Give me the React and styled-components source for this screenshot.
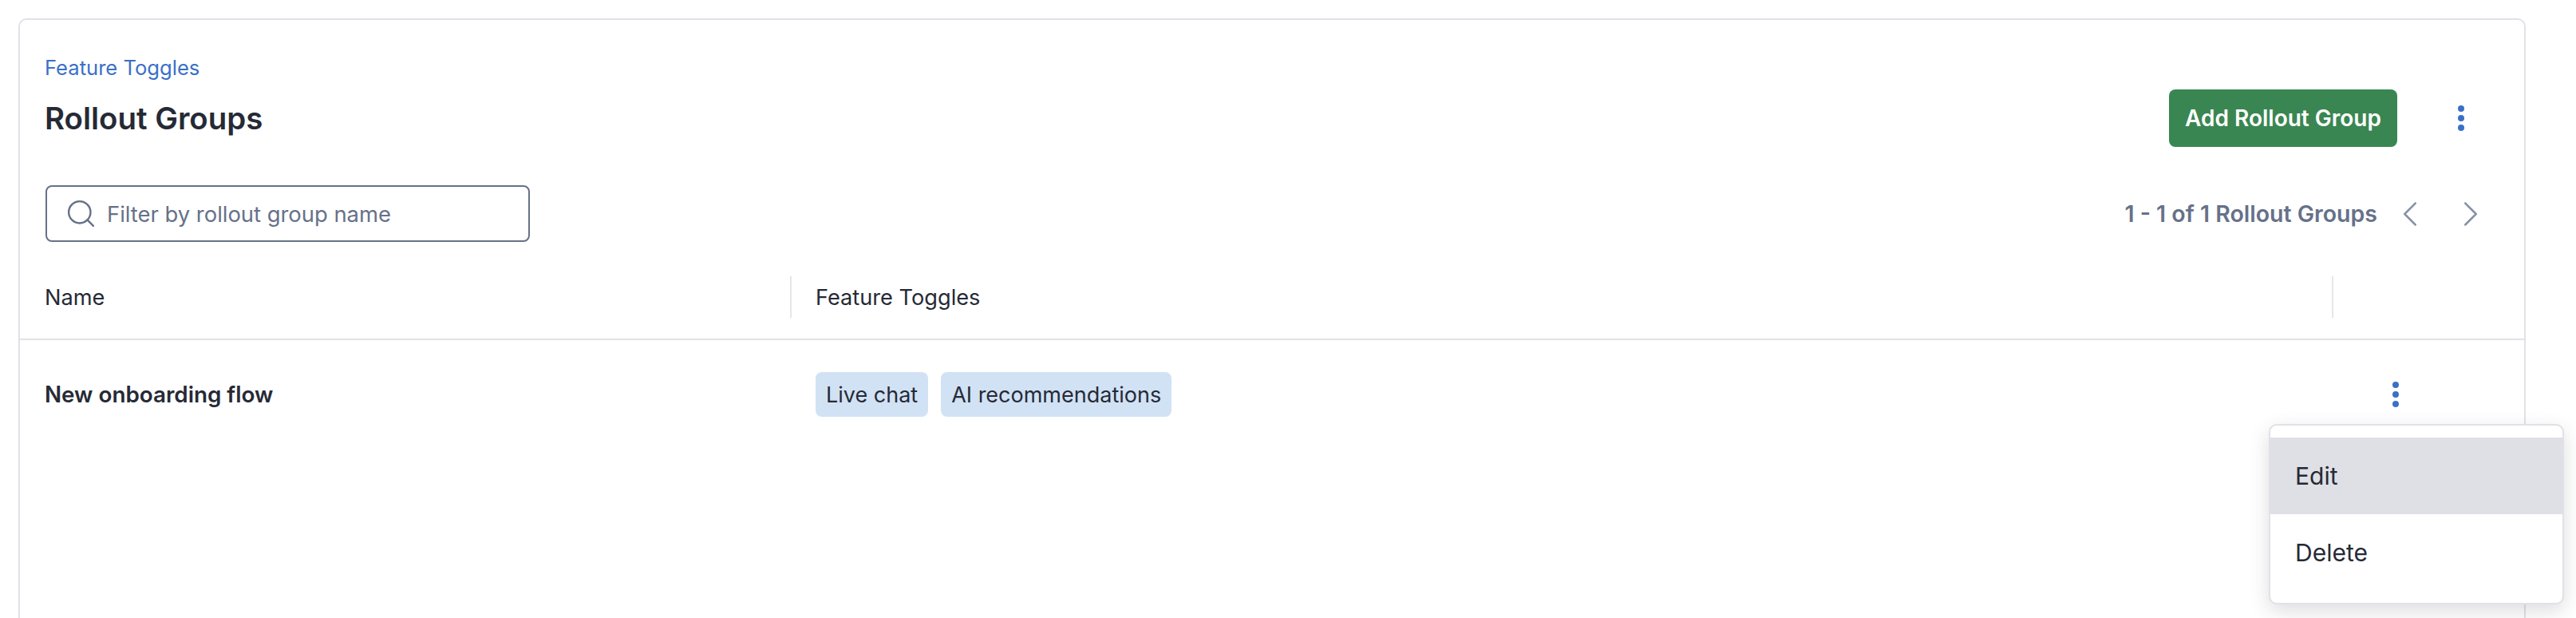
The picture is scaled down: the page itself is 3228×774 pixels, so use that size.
import React from 'react';
import styled, { createGlobalStyle } from 'styled-components';
import { Search, ChevronLeft, ChevronRight } from 'lucide-react';

const GlobalStyle = createGlobalStyle`
  html, body {
    margin: 0;
    padding: 0;
    height: 774px;
    overflow: hidden;
    background: #ffffff;
    font-family: Inter, "Liberation Sans", sans-serif;
    color: #262a35;
  }
  * {
    box-sizing: border-box;
  }
`;

const Page = styled.div`
  padding: 23px 63px 0 23px;
  height: 774px;
  overflow: hidden;
`;

const Card = styled.section`
  height: 800px;
  border: 2px solid #e1e1e7;
  border-radius: 10px;
`;

const Header = styled.header`
  display: flex;
  align-items: flex-start;
  justify-content: space-between;
  padding: 42px 75px 0 31px;
  height: 207px;
`;

const Crumb = styled.a`
  display: block;
  font-size: 25.6px;
  line-height: 36px;
  color: #3a70c7;
`;

const Title = styled.h1`
  margin: 18px 0 0;
  font-size: 38.4px;
  line-height: 54px;
  font-weight: 600;
  color: #262a35;
`;

const Actions = styled.div`
  display: flex;
  align-items: center;
  gap: 76px;
  margin-top: 45px;
`;

const PrimaryButton = styled.button`
  height: 72px;
  width: 286px;
  border: 0;
  border-radius: 8px;
  background: #3a8652;
  color: #ffffff;
  font: 600 28px/1 Inter, sans-serif;
`;

const Kebab = styled.span`
  display: flex;
  flex-direction: column;
  align-items: center;
  gap: 4px;
  width: 8px;
`;

const Dot = styled.i`
  display: block;
  width: 8px;
  height: 8px;
  border-radius: 50%;
  background: #3a70c7;
`;

const Toolbar = styled.div`
  display: flex;
  align-items: center;
  justify-content: space-between;
  height: 71px;
  padding: 0 40px 0 32px;
`;

const SearchBox = styled.label`
  display: flex;
  align-items: center;
  gap: 12px;
  width: 607px;
  height: 71px;
  padding: 1px 22px 0;
  border: 2px solid #667189;
  border-radius: 8px;
  color: #667189;
  font-size: 27.4px;
`;

const SearchIcon = styled(Search)`
  width: 41px;
  height: 41px;
  margin-top: -1px;
`;

const Pager = styled.div`
  display: flex;
  align-items: center;
  color: #667189;
  font-size: 28.5px;
  font-weight: 600;
`;

const PagerIcons = styled.div`
  display: flex;
  gap: 22px;
  margin-left: 14px;
  color: #8792a8;
`;

const Grid = styled.div`
  display: grid;
  grid-template-columns: 965px 1932px 1fr;
`;

const HeadRow = styled(Grid)`
  align-items: center;
  height: 123px;
  padding-top: 17px;
  border-bottom: 2px solid #e1e1e7;
`;

const HeadCell = styled.div`
  display: flex;
  align-items: center;
  height: 52px;
  padding-left: ${p => (p.$first ? '31px' : '30px')};
  border-left: ${p => (p.$first ? '0' : '2px solid #e6e6ea')};
  font-size: 27.2px;
  color: #262a35;
`;

const BodyRow = styled(Grid)`
  position: relative;
  align-items: center;
  height: 136px;
`;

const NameCell = styled.div`
  padding-left: 31px;
  font-size: 27.8px;
  font-weight: 600;
`;

const TagList = styled.div`
  display: flex;
  gap: 16px;
  padding-left: 32px;
`;

const Tag = styled.span`
  display: flex;
  align-items: center;
  height: 56px;
  padding: 0 13px;
  border-radius: 8px;
  background: #d1e2f5;
  font-size: 27px;
`;

const RowAction = styled.div`
  display: flex;
  padding-left: 76px;
`;

const Menu = styled.div`
  position: absolute;
  top: 105px;
  right: -50px;
  width: 370px;
  height: 226px;
  padding: 15px 0;
  border: 2px solid #e1e1e7;
  border-radius: 10px;
  background: #ffffff;
  box-shadow: 0 8px 24px rgba(38, 42, 53, 0.16);
`;

const MenuItem = styled.div`
  display: flex;
  align-items: center;
  height: 96px;
  padding-left: 31px;
  font-size: 30px;
  background: ${p => (p.$active ? '#dfe0e5' : 'transparent')};
`;

const Dots = () => (
  <Kebab>
    <Dot />
    <Dot />
    <Dot />
  </Kebab>
);

const App = () => {
  return (
    <Page>
      <GlobalStyle />
      <Card>
        <Header>
          <div>
            <Crumb>Feature Toggles</Crumb>
            <Title>Rollout Groups</Title>
          </div>
          <Actions>
            <PrimaryButton>Add Rollout Group</PrimaryButton>
            <Dots />
          </Actions>
        </Header>
        <Toolbar>
          <SearchBox>
            <SearchIcon strokeWidth={1.4} />
            Filter by rollout group name
          </SearchBox>
          <Pager>
            1 - 1 of 1 Rollout Groups
            <PagerIcons>
              <ChevronLeft size={54} strokeWidth={1.1} />
              <ChevronRight size={54} strokeWidth={1.1} />
            </PagerIcons>
          </Pager>
        </Toolbar>
        <HeadRow>
          <HeadCell $first>Name</HeadCell>
          <HeadCell>Feature Toggles</HeadCell>
          <HeadCell />
        </HeadRow>
        <BodyRow>
          <NameCell>New onboarding flow</NameCell>
          <TagList>
            <Tag>Live chat</Tag>
            <Tag>AI recommendations</Tag>
          </TagList>
          <RowAction>
            <Dots />
          </RowAction>
          <Menu>
            <MenuItem $active>Edit</MenuItem>
            <MenuItem>Delete</MenuItem>
          </Menu>
        </BodyRow>
      </Card>
    </Page>
  );
};

export default App;
